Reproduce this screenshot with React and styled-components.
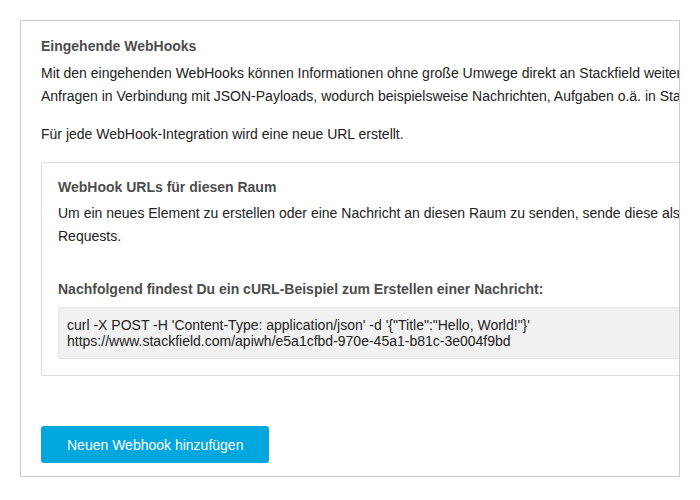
import React from 'react';
import styled, { createGlobalStyle } from 'styled-components';

const GlobalStyle = createGlobalStyle`
  html, body {
    margin: 0;
    padding: 0;
    background: #ffffff;
  }
  body {
    font-family: "Liberation Sans", Arial, sans-serif;
    font-size: 14px;
    color: #222;
  }
`;

const Page = styled.div`
  padding: 20px;
`;

const Panel = styled.div`
  width: 660px;
  box-sizing: border-box;
  border: 1px solid #cccccc;
  padding: 15px 20px 13px;
  overflow: hidden;
`;

// the real content is wider than the panel and gets cut off on the right
const Content = styled.div`
  width: 1000px;
`;

const Title = styled.div`
  font-weight: bold;
  color: #4d4d4d;
  line-height: 20px;
  margin-bottom: ${p => p.$gap ?? 6}px;
`;

const Text = styled.p`
  margin: 0 0 ${p => p.$gap || 0}px;
  line-height: 23px;
  white-space: nowrap;
`;

const Box = styled.div`
  margin-top: 16px;
  border: 1px solid #dedede;
  border-radius: 2px;
  padding: 14px 16px 16px;
`;

const SubTitle = styled(Title)`
  margin-top: ${p => p.$top || 0}px;
`;

const Code = styled.div`
  margin-top: 8px;
  background: #f1f1f1;
  border: 1px solid #e6e6e6;
  border-radius: 2px;
  padding: 9px 8px;
  line-height: 16px;
  color: #222;
`;

const Button = styled.button`
  margin-top: 50px;
  height: 37px;
  padding: 0 26px;
  border: none;
  border-radius: 3px;
  background: #00a6de;
  color: #fff;
  font-family: "Liberation Sans", Arial, sans-serif;
  font-size: 14px;
  cursor: pointer;
`;

export default function App() {
  return (
    <Page>
      <GlobalStyle />
      <Panel>
        <Content>
          <Title>Eingehende WebHooks</Title>
          <Text $gap={15}>
            Mit den eingehenden WebHooks können Informationen ohne große Umwege direkt an Stackfield weitergeleitet werden. Stackfield akzeptiert dabei HTTP POST
            <br />
            Anfragen in Verbindung mit JSON-Payloads, wodurch beispielsweise Nachrichten, Aufgaben o.ä. in Stackfield erstellt werden können.
          </Text>
          <Text>Für jede WebHook-Integration wird eine neue URL erstellt.</Text>

          <Box>
            <SubTitle $gap={5}>WebHook URLs für diesen Raum</SubTitle>
            <Text>
              Um ein neues Element zu erstellen oder eine Nachricht an diesen Raum zu senden, sende diese als JSON-Payload per HTTP POST-
              <br />
              Requests.
            </Text>
            <SubTitle $top={31} $gap={0}>
              Nachfolgend findest Du ein cURL-Beispiel zum Erstellen einer Nachricht:
            </SubTitle>
            <Code>
              curl -X POST -H 'Content-Type: application/json' -d '{'{"Title":"Hello, World!"}'}'
              <br />
              https://www.stackfield.com/apiwh/e5a1cfbd-970e-45a1-b81c-3e004f9bd
            </Code>
          </Box>

          <Button>Neuen Webhook hinzufügen</Button>
        </Content>
      </Panel>
    </Page>
  );
}
